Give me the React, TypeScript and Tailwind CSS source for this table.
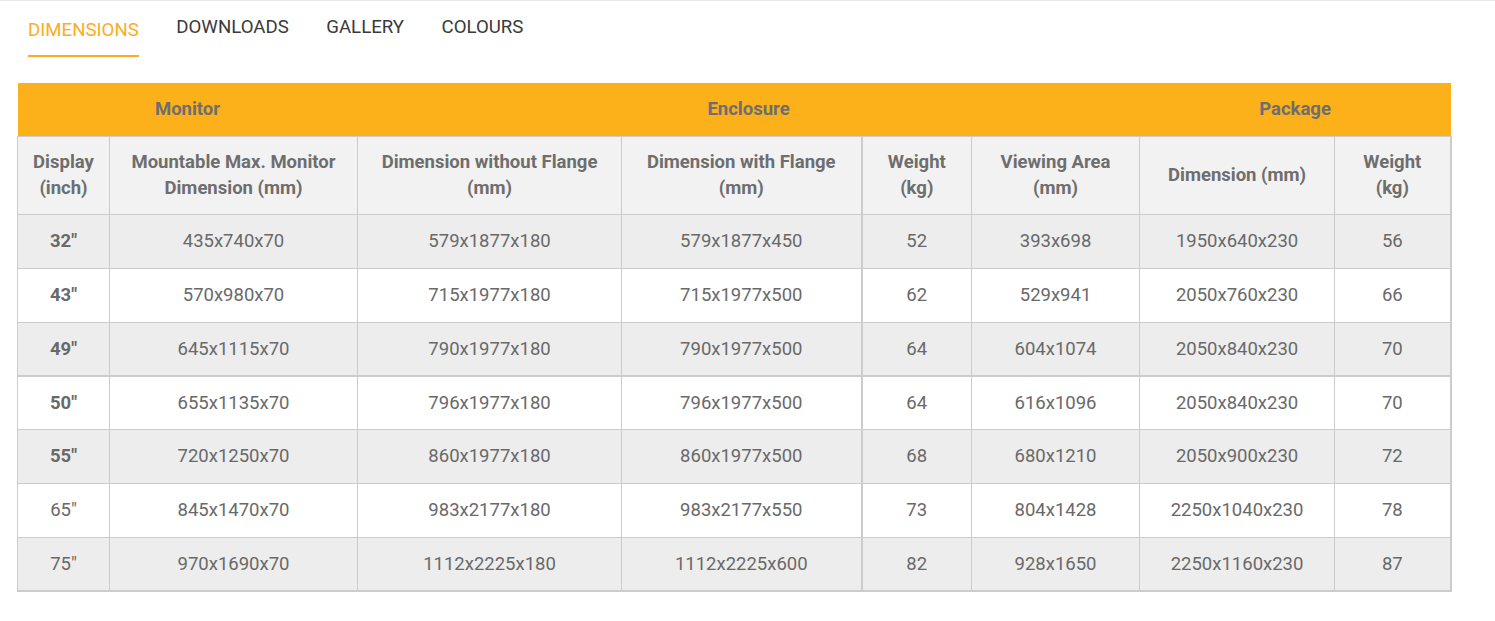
import React from "react";

const rows = [
  ["32\"", "435x740x70", "579x1877x180", "579x1877x450", "52", "393x698", "1950x640x230", "56", true],
  ["43\"", "570x980x70", "715x1977x180", "715x1977x500", "62", "529x941", "2050x760x230", "66", true],
  ["49\"", "645x1115x70", "790x1977x180", "790x1977x500", "64", "604x1074", "2050x840x230", "70", true],
  ["50\"", "655x1135x70", "796x1977x180", "796x1977x500", "64", "616x1096", "2050x840x230", "70", true],
  ["55\"", "720x1250x70", "860x1977x180", "860x1977x500", "68", "680x1210", "2050x900x230", "72", true],
  ["65\"", "845x1470x70", "983x2177x180", "983x2177x550", "73", "804x1428", "2250x1040x230", "78", false],
  ["75\"", "970x1690x70", "1112x2225x180", "1112x2225x600", "82", "928x1650", "2250x1160x230", "87", false],
] as const;

const widths = [92, 248, 264, 240, 110, 168, 195, 116];

export default function App() {
  return (
    <div
      className="w-[1495px] h-[621px] bg-white border-t border-[#e6e6e6] overflow-hidden"
      style={{ fontFamily: "Roboto, 'Liberation Sans', sans-serif" }}
    >
      <div className="flex items-start gap-[37.5px] pl-[28px] pt-[13px] text-[18.65px] leading-[26px]">
        <div className="inline-flex flex-col pt-[3px]">
          <span className="text-[#fbad1f]">DIMENSIONS</span>
          <span className="mt-[12px] h-[2px] w-full bg-[#fbad1f]" />
        </div>
        <span className="text-[#3a3a3a]">DOWNLOADS</span>
        <span className="text-[#3a3a3a]">GALLERY</span>
        <span className="text-[#3a3a3a]">COLOURS</span>
      </div>
      <div className="mt-[26px] ml-[17px]">
        <table className="border-collapse table-fixed w-[1433px] text-[18.5px] leading-[26px] text-[#696969]">
          <colgroup>
            {widths.map((w, i) => (
              <col key={i} style={{ width: w }} />
            ))}
          </colgroup>
          <thead>
            <tr className="h-[53px] bg-[#fcb01a] font-bold text-[#6e6e6e]">
              <th colSpan={2} className="text-center font-bold">Monitor</th>
              <th colSpan={4} className="text-center font-bold">Enclosure</th>
              <th colSpan={2} className="text-center font-bold">Package</th>
            </tr>
            <tr className="h-[78px] bg-[#f2f2f2] font-bold text-[#6e6e6e]">
              <th className="border border-[#cccccc] font-bold">Display<br />(inch)</th>
              <th className="border border-[#cccccc] font-bold">Mountable Max. Monitor<br />Dimension (mm)</th>
              <th className="border border-[#cccccc] font-bold">Dimension without Flange<br />(mm)</th>
              <th className="border border-[#cccccc] border-r-2 font-bold">Dimension with Flange<br />(mm)</th>
              <th className="border border-[#cccccc] font-bold">Weight<br />(kg)</th>
              <th className="border border-[#cccccc] font-bold">Viewing Area<br />(mm)</th>
              <th className="border border-[#cccccc] font-bold">Dimension (mm)</th>
              <th className="border border-[#cccccc] border-r-2 font-bold">Weight<br />(kg)</th>
            </tr>
          </thead>
          <tbody>
            {rows.map((r, i) => {
              const odd = i % 2 === 0;
              const thickTop = i === 3;
              const last = i === rows.length - 1;
              return (
                <tr
                  key={i}
                  className={`${thickTop ? "h-[53px]" : "h-[54px]"} ${odd ? "bg-[#ededed]" : "bg-white"}`}
                >
                  {r.slice(0, 8).map((c, j) => (
                    <td
                      key={j}
                      className={[
                        "border border-[#cccccc] text-center",
                        j === 0 && r[8] ? "font-bold" : "",
                        j === 3 || j === 7 ? "border-r-2" : "",
                        thickTop ? "border-t-2" : "",
                        last ? "border-b-2" : "",
                      ].join(" ")}
                    >
                      {c as string}
                    </td>
                  ))}
                </tr>
              );
            })}
          </tbody>
        </table>
      </div>
    </div>
  );
}
